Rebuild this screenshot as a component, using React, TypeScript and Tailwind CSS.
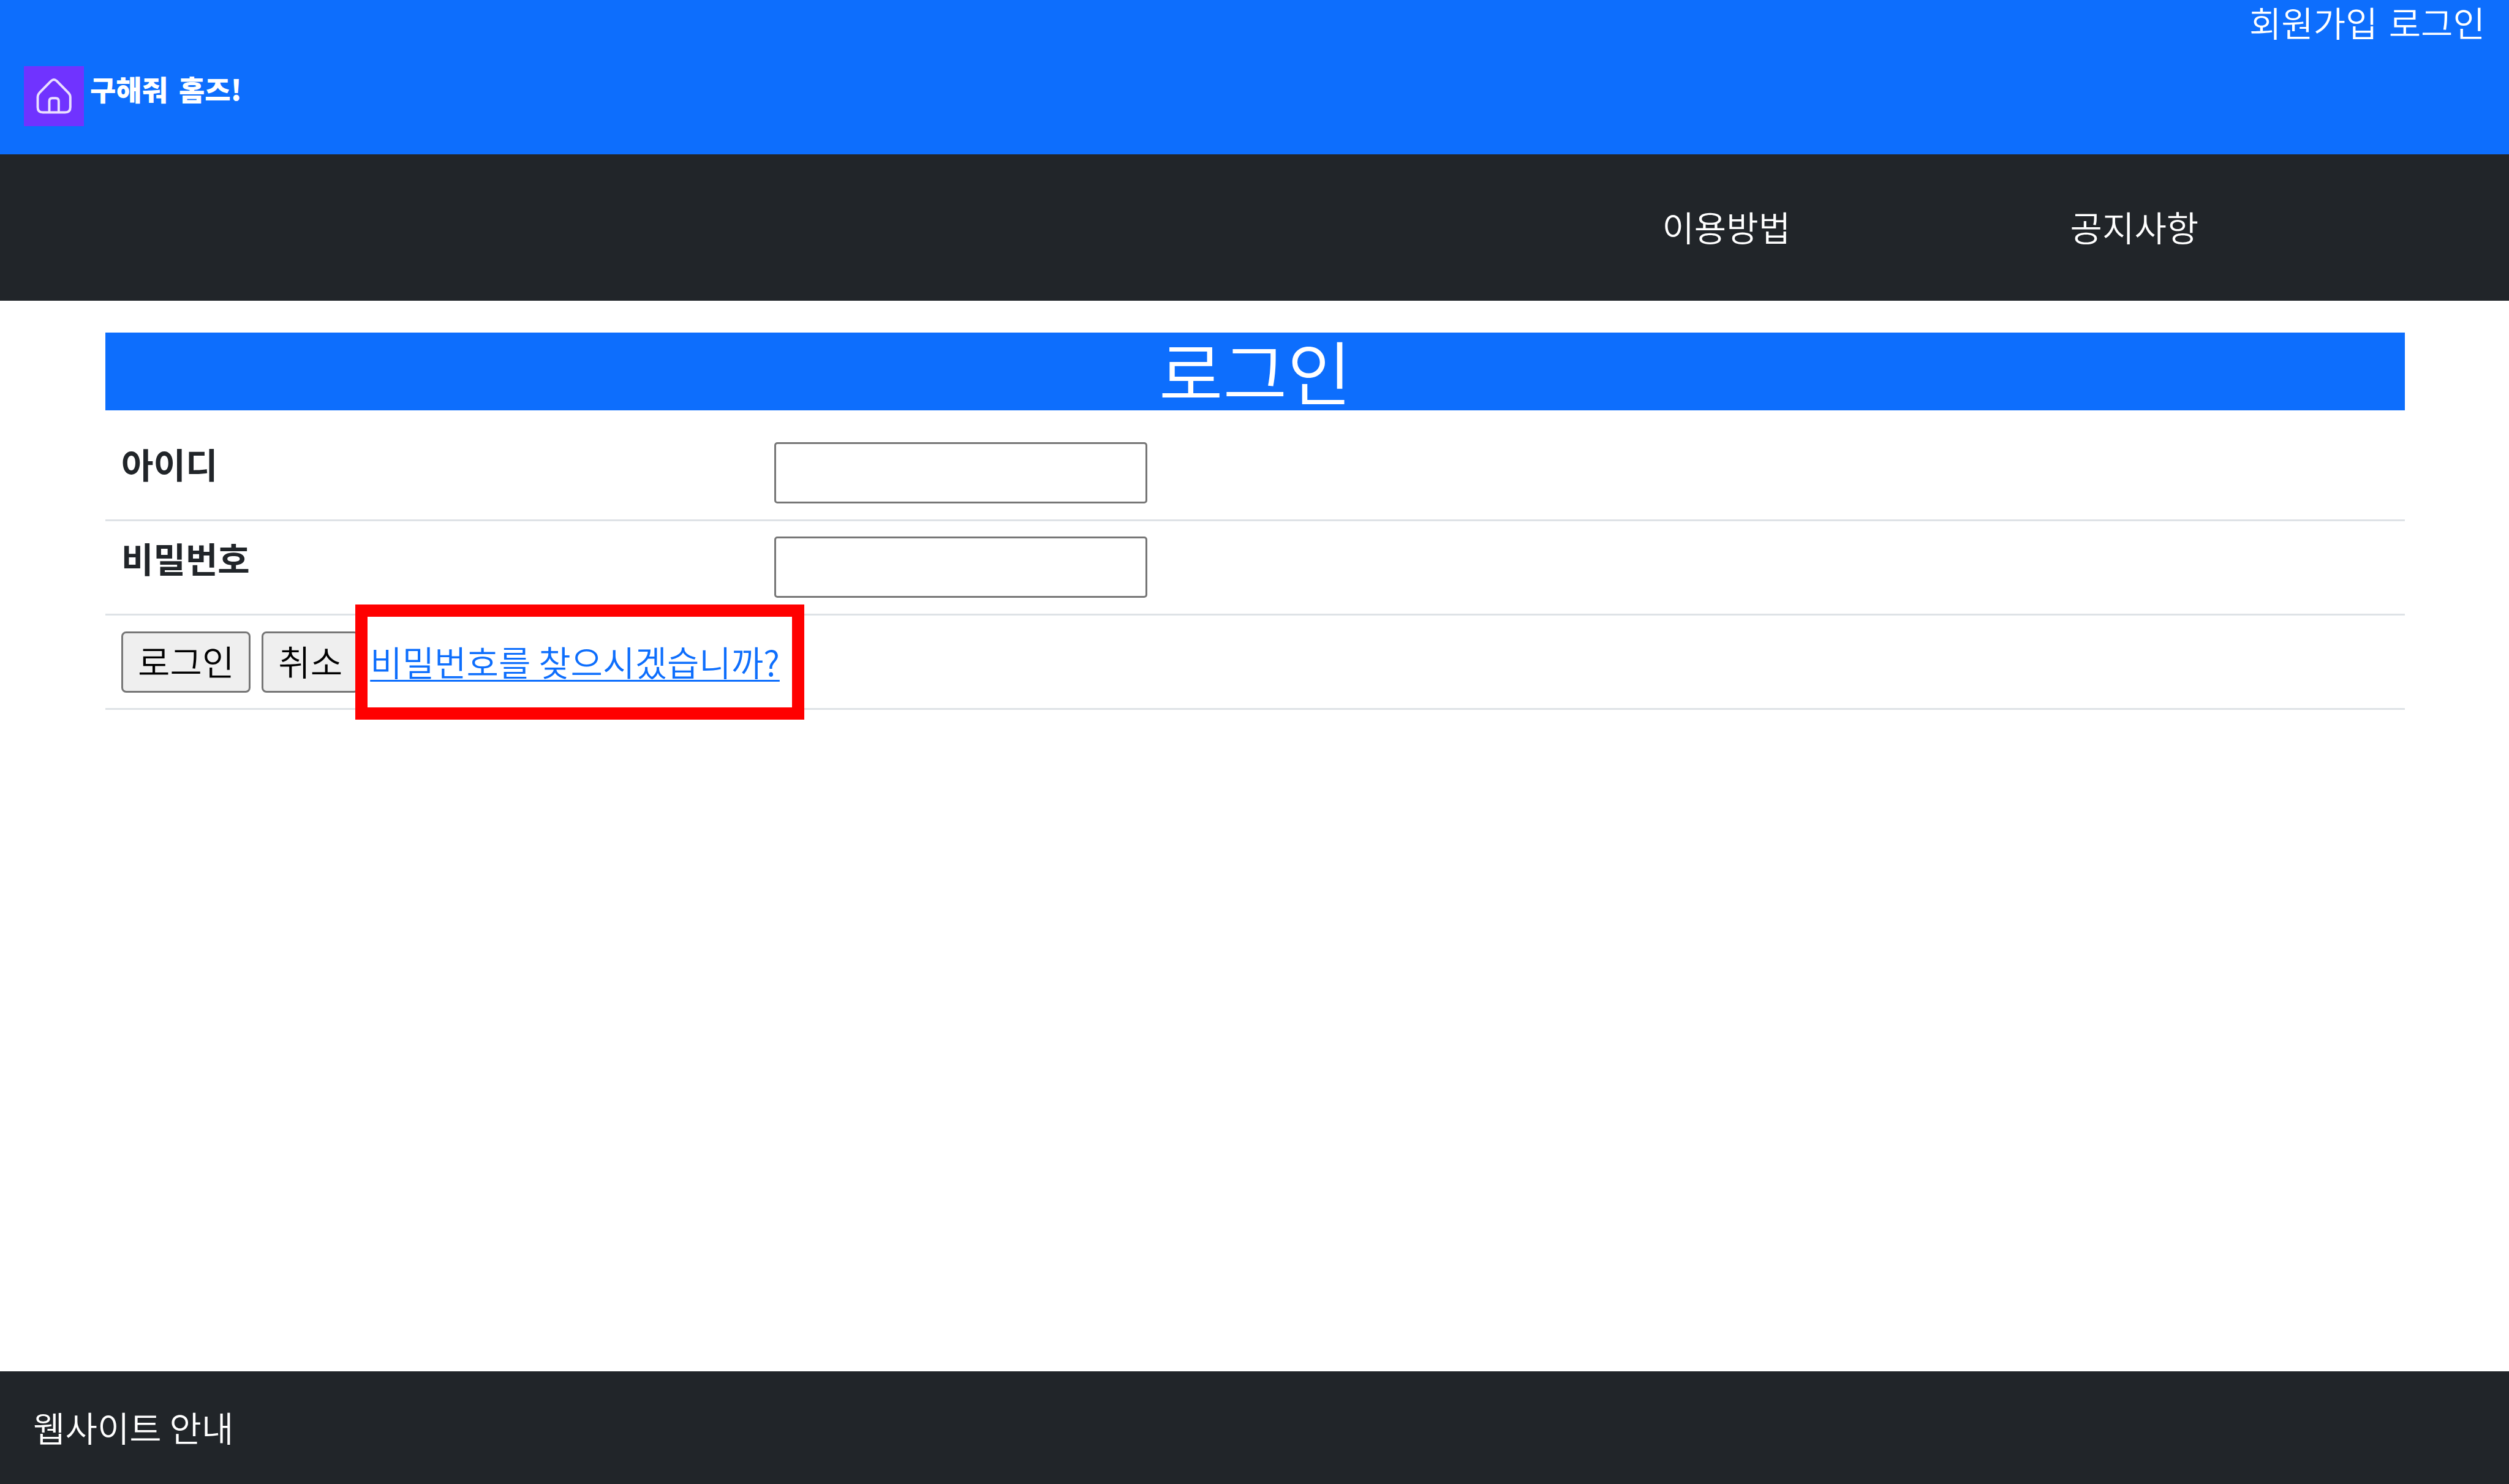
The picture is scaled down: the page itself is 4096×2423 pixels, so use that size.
import React from "react";

function HouseLogo() {
  return (
    <svg viewBox="0 0 300 300" className="size-[98px] shrink-0" aria-hidden="true">
      <rect width="300" height="300" fill="#7033ff" />
      <g fill="none" stroke="#eadfff" strokeWidth="12" strokeLinejoin="round">
        <path d="M69 155Q69 143 78 133L136 74Q150 61 164 74L222 133Q232 143 232 155V205Q232 231 206 231H95Q69 231 69 205Z" />
        <path d="M127 231V175Q127 160 142 160H159Q174 160 174 175V231" />
      </g>
    </svg>
  );
}

const inputClass =
  "block h-[100px] w-[609px] rounded-[5px] border-[3px] border-[#767676] bg-white px-2 text-[57px] text-black";
const buttonClass =
  "h-[100px] rounded-[8px] border-[3px] border-[#767676] bg-[#efefef] px-[24px] pb-[6px] leading-[80px] text-black";

export default function App() {
  return (
    <div className="flex min-h-screen flex-col bg-white font-['Noto_Sans_CJK_KR',sans-serif] text-[57px] leading-[76px] font-[350] text-[#212529]">
      <header className="h-[252px] bg-[#0d6efd] text-white">
        <div className="flex h-[76px] justify-end gap-[18px] pr-[39px] leading-[70px]">
          <a href="#join">회원가입</a>
          <a href="#login">로그인</a>
        </div>
        <a href="#home" className="mt-8 ml-[39px] flex w-fit items-start gap-[10px]">
          <HouseLogo />
          <span className="flex gap-[18px] text-[46px] leading-[72px] font-black">
            <span>구해줘</span>
            <span>홈즈!</span>
          </span>
        </a>
      </header>

      <nav className="flex h-[239px] items-center justify-end bg-[#212529] pr-[6.8%] pb-[6px] text-center text-white">
        <a href="#guide" className="w-[17.45%]">이용방법</a>
        <a href="#notice" className="w-[17.45%]">공지사항</a>
      </nav>

      <main className="mr-[170px] ml-[172px] pt-[52px]">
        <h1 className="h-[127px] bg-[#0d6efd] text-center text-[114px] leading-[121px] text-white">로그인</h1>
        <form onSubmit={(e) => e.preventDefault()}>
          <table className="mt-[27px] w-full table-fixed border-collapse">
            <colgroup>
              <col className="w-[28.4%]" />
              <col />
            </colgroup>
            <tbody>
              <tr className="border-b-[3px] border-[#dee2e6]">
                <th scope="row" className="pt-[21px] pl-[26px] text-left align-top">
                  <label htmlFor="userid">아이디</label>
                </th>
                <td className="pt-[25px] pb-[26px] pl-[26px]">
                  <input id="userid" type="text" className={inputClass} />
                </td>
              </tr>
              <tr className="border-b-[3px] border-[#dee2e6]">
                <th scope="row" className="pt-[21px] pl-[26px] text-left align-top">
                  <label htmlFor="userpw">비밀번호</label>
                </th>
                <td className="pt-[25px] pb-[26px] pl-[26px]">
                  <input id="userpw" type="password" className={inputClass} />
                </td>
              </tr>
              <tr className="border-b-[3px] border-[#dee2e6]">
                <td colSpan={2} className="pt-[26px] pb-[25px] pl-[26px]">
                  <div className="flex items-center gap-[18px]">
                    <button type="submit" className={buttonClass}>로그인</button>
                    <button type="button" className={buttonClass}>취소</button>
                    <div className="relative">
                      <a
                        href="#find"
                        className="block pb-[4px] leading-[72px] text-[#0d6efd] underline decoration-[3px] underline-offset-[6px]"
                      >
                        비밀번호를 찾으시겠습니까?
                      </a>
                      <span
                        aria-hidden="true"
                        className="pointer-events-none absolute -top-[56px] -right-[40px] -bottom-[56px] -left-[24px] border-[20px] border-[#ff0000]"
                      />
                    </div>
                  </div>
                </td>
              </tr>
            </tbody>
          </table>
        </form>
      </main>

      <footer className="mt-auto flex h-[184px] items-center bg-[#212529] pb-[4px] pl-[54px] text-white">
        웹사이트 안내
      </footer>
    </div>
  );
}
